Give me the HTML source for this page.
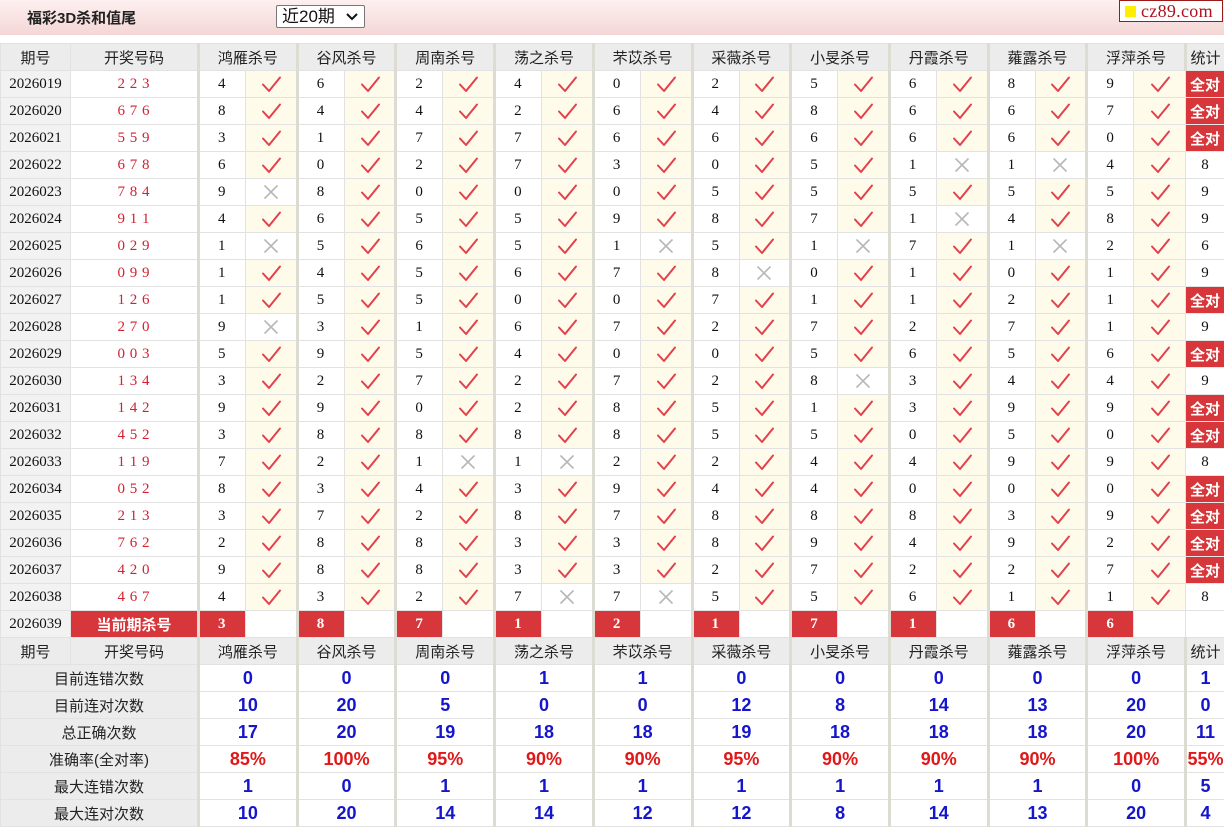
<!DOCTYPE html>
<html><head><meta charset="utf-8">
<style>
*{margin:0;padding:0;box-sizing:border-box}
body{width:1224px;height:827px;background:#fff;font-family:"Liberation Sans","Noto Sans CJK SC",sans-serif;overflow:hidden;position:relative}
.top{position:absolute;left:0;top:0;width:1224px;height:35px;background:linear-gradient(#fdf0f0,#f5d6d6)}
.ttl{position:absolute;left:27px;top:7px;font-size:15px;font-weight:bold;color:#222}
.sel{position:absolute;left:276px;top:5px;width:89px;height:23px;border:1px solid #777;background:#fff;border-radius:2px;font-size:17px;padding-left:5px;line-height:21px;color:#111}
.sel svg{position:absolute;right:6px;top:7px}
.logo{position:absolute;left:1119px;top:0;width:104px;height:22px;border:1px solid #9a1a1a;background:#fff;font-family:"Liberation Serif",serif;font-size:18px;color:#b01020;line-height:20px;padding-left:21px;letter-spacing:0.3px}
.logo i{position:absolute;left:5px;top:5px;width:11px;height:11px;background:#ffee00}
table{position:absolute;left:0;top:43px;border-collapse:collapse;table-layout:fixed;width:1224px}
td{border:1px solid #e2e2e2;height:27px;text-align:center;vertical-align:middle;padding:0;font-size:15px}
.h td{background:#ececec;color:#222;font-size:15px}
.h td.g{border-left:3px solid #dcdcd2}
.p{background:#f2f2f2;font-family:"Liberation Serif",serif;font-size:15px;color:#111}
.k{font-family:"Liberation Serif",serif;color:#d42030;letter-spacing:1px;word-spacing:-1px}
.n{border-left:3px solid #dcdcd2;font-family:"Liberation Serif",serif;color:#111;text-align:left;padding-left:18px}
.y{background:#fffbea}
.x{background:#fff}
td svg{display:block;margin:0 auto;width:22px;height:18px}
.s{font-family:"Liberation Serif",serif;color:#111}
.q{background:#d7363a;color:#fff;font-weight:bold;font-size:15px;border-color:#e6e6e6}
.kr{background:#d7363a;color:#fff;font-weight:bold;font-size:15px}
.kn{border-left:3px solid #dcdcd2;background:#d7363a;color:#fff;font-weight:bold;font-family:"Liberation Serif",serif;text-align:left;padding-left:18px}
.l{background:#ececec;color:#222}
.v{border-left:3px solid #dcdcd2;color:#1515cc;font-weight:bold;font-size:18px}
.r{color:#e01818}
</style></head><body>
<svg width="0" height="0" style="position:absolute">
<symbol id="c" viewBox="0 0 22 18"><path d="M3 9.5 L9 16 L20 2.5" fill="none" stroke="#e4404c" stroke-width="2" stroke-linecap="round" stroke-linejoin="round"/></symbol>
<symbol id="x" viewBox="0 0 22 18"><path d="M4.5 2.5 L17.5 15.5 M17.5 2.5 L4.5 15.5" fill="none" stroke="#b8b8b8" stroke-width="1.6"/></symbol>
</svg>
<div class="top"></div>
<div class="ttl">福彩3D杀和值尾</div>
<div class="sel">近20期<svg width="12" height="8" viewBox="0 0 12 8"><path d="M1 1 L6 6 L11 1" fill="none" stroke="#111" stroke-width="2"/></svg></div>
<div class="logo"><i></i>cz89.com</div>
<table>
<colgroup><col style="width:70px"><col style="width:128px">
<col style="width:47px"><col style="width:51.7px"><col style="width:47px"><col style="width:51.7px"><col style="width:47px"><col style="width:51.7px"><col style="width:47px"><col style="width:51.7px"><col style="width:47px"><col style="width:51.7px"><col style="width:47px"><col style="width:51.7px"><col style="width:47px"><col style="width:51.7px"><col style="width:47px"><col style="width:51.7px"><col style="width:47px"><col style="width:51.7px"><col style="width:47px"><col style="width:51.7px">
<col style="width:39px"></colgroup>
<tr class="h" style="height:26px"><td>期号</td><td>开奖号码</td><td class="g" colspan="2">鸿雁杀号</td><td class="g" colspan="2">谷风杀号</td><td class="g" colspan="2">周南杀号</td><td class="g" colspan="2">荡之杀号</td><td class="g" colspan="2">芣苡杀号</td><td class="g" colspan="2">采薇杀号</td><td class="g" colspan="2">小旻杀号</td><td class="g" colspan="2">丹霞杀号</td><td class="g" colspan="2">蕹露杀号</td><td class="g" colspan="2">浮萍杀号</td><td class="g">统计</td></tr>
<tr><td class="p">2026019</td><td class="k">2 2 3</td><td class="n">4</td><td class="y"><svg><use href="#c"/></svg></td><td class="n">6</td><td class="y"><svg><use href="#c"/></svg></td><td class="n">2</td><td class="y"><svg><use href="#c"/></svg></td><td class="n">4</td><td class="y"><svg><use href="#c"/></svg></td><td class="n">0</td><td class="y"><svg><use href="#c"/></svg></td><td class="n">2</td><td class="y"><svg><use href="#c"/></svg></td><td class="n">5</td><td class="y"><svg><use href="#c"/></svg></td><td class="n">6</td><td class="y"><svg><use href="#c"/></svg></td><td class="n">8</td><td class="y"><svg><use href="#c"/></svg></td><td class="n">9</td><td class="y"><svg><use href="#c"/></svg></td><td class="q">全对</td></tr>
<tr><td class="p">2026020</td><td class="k">6 7 6</td><td class="n">8</td><td class="y"><svg><use href="#c"/></svg></td><td class="n">4</td><td class="y"><svg><use href="#c"/></svg></td><td class="n">4</td><td class="y"><svg><use href="#c"/></svg></td><td class="n">2</td><td class="y"><svg><use href="#c"/></svg></td><td class="n">6</td><td class="y"><svg><use href="#c"/></svg></td><td class="n">4</td><td class="y"><svg><use href="#c"/></svg></td><td class="n">8</td><td class="y"><svg><use href="#c"/></svg></td><td class="n">6</td><td class="y"><svg><use href="#c"/></svg></td><td class="n">6</td><td class="y"><svg><use href="#c"/></svg></td><td class="n">7</td><td class="y"><svg><use href="#c"/></svg></td><td class="q">全对</td></tr>
<tr><td class="p">2026021</td><td class="k">5 5 9</td><td class="n">3</td><td class="y"><svg><use href="#c"/></svg></td><td class="n">1</td><td class="y"><svg><use href="#c"/></svg></td><td class="n">7</td><td class="y"><svg><use href="#c"/></svg></td><td class="n">7</td><td class="y"><svg><use href="#c"/></svg></td><td class="n">6</td><td class="y"><svg><use href="#c"/></svg></td><td class="n">6</td><td class="y"><svg><use href="#c"/></svg></td><td class="n">6</td><td class="y"><svg><use href="#c"/></svg></td><td class="n">6</td><td class="y"><svg><use href="#c"/></svg></td><td class="n">6</td><td class="y"><svg><use href="#c"/></svg></td><td class="n">0</td><td class="y"><svg><use href="#c"/></svg></td><td class="q">全对</td></tr>
<tr><td class="p">2026022</td><td class="k">6 7 8</td><td class="n">6</td><td class="y"><svg><use href="#c"/></svg></td><td class="n">0</td><td class="y"><svg><use href="#c"/></svg></td><td class="n">2</td><td class="y"><svg><use href="#c"/></svg></td><td class="n">7</td><td class="y"><svg><use href="#c"/></svg></td><td class="n">3</td><td class="y"><svg><use href="#c"/></svg></td><td class="n">0</td><td class="y"><svg><use href="#c"/></svg></td><td class="n">5</td><td class="y"><svg><use href="#c"/></svg></td><td class="n">1</td><td class="x"><svg><use href="#x"/></svg></td><td class="n">1</td><td class="x"><svg><use href="#x"/></svg></td><td class="n">4</td><td class="y"><svg><use href="#c"/></svg></td><td class="s">8</td></tr>
<tr><td class="p">2026023</td><td class="k">7 8 4</td><td class="n">9</td><td class="x"><svg><use href="#x"/></svg></td><td class="n">8</td><td class="y"><svg><use href="#c"/></svg></td><td class="n">0</td><td class="y"><svg><use href="#c"/></svg></td><td class="n">0</td><td class="y"><svg><use href="#c"/></svg></td><td class="n">0</td><td class="y"><svg><use href="#c"/></svg></td><td class="n">5</td><td class="y"><svg><use href="#c"/></svg></td><td class="n">5</td><td class="y"><svg><use href="#c"/></svg></td><td class="n">5</td><td class="y"><svg><use href="#c"/></svg></td><td class="n">5</td><td class="y"><svg><use href="#c"/></svg></td><td class="n">5</td><td class="y"><svg><use href="#c"/></svg></td><td class="s">9</td></tr>
<tr><td class="p">2026024</td><td class="k">9 1 1</td><td class="n">4</td><td class="y"><svg><use href="#c"/></svg></td><td class="n">6</td><td class="y"><svg><use href="#c"/></svg></td><td class="n">5</td><td class="y"><svg><use href="#c"/></svg></td><td class="n">5</td><td class="y"><svg><use href="#c"/></svg></td><td class="n">9</td><td class="y"><svg><use href="#c"/></svg></td><td class="n">8</td><td class="y"><svg><use href="#c"/></svg></td><td class="n">7</td><td class="y"><svg><use href="#c"/></svg></td><td class="n">1</td><td class="x"><svg><use href="#x"/></svg></td><td class="n">4</td><td class="y"><svg><use href="#c"/></svg></td><td class="n">8</td><td class="y"><svg><use href="#c"/></svg></td><td class="s">9</td></tr>
<tr><td class="p">2026025</td><td class="k">0 2 9</td><td class="n">1</td><td class="x"><svg><use href="#x"/></svg></td><td class="n">5</td><td class="y"><svg><use href="#c"/></svg></td><td class="n">6</td><td class="y"><svg><use href="#c"/></svg></td><td class="n">5</td><td class="y"><svg><use href="#c"/></svg></td><td class="n">1</td><td class="x"><svg><use href="#x"/></svg></td><td class="n">5</td><td class="y"><svg><use href="#c"/></svg></td><td class="n">1</td><td class="x"><svg><use href="#x"/></svg></td><td class="n">7</td><td class="y"><svg><use href="#c"/></svg></td><td class="n">1</td><td class="x"><svg><use href="#x"/></svg></td><td class="n">2</td><td class="y"><svg><use href="#c"/></svg></td><td class="s">6</td></tr>
<tr><td class="p">2026026</td><td class="k">0 9 9</td><td class="n">1</td><td class="y"><svg><use href="#c"/></svg></td><td class="n">4</td><td class="y"><svg><use href="#c"/></svg></td><td class="n">5</td><td class="y"><svg><use href="#c"/></svg></td><td class="n">6</td><td class="y"><svg><use href="#c"/></svg></td><td class="n">7</td><td class="y"><svg><use href="#c"/></svg></td><td class="n">8</td><td class="x"><svg><use href="#x"/></svg></td><td class="n">0</td><td class="y"><svg><use href="#c"/></svg></td><td class="n">1</td><td class="y"><svg><use href="#c"/></svg></td><td class="n">0</td><td class="y"><svg><use href="#c"/></svg></td><td class="n">1</td><td class="y"><svg><use href="#c"/></svg></td><td class="s">9</td></tr>
<tr><td class="p">2026027</td><td class="k">1 2 6</td><td class="n">1</td><td class="y"><svg><use href="#c"/></svg></td><td class="n">5</td><td class="y"><svg><use href="#c"/></svg></td><td class="n">5</td><td class="y"><svg><use href="#c"/></svg></td><td class="n">0</td><td class="y"><svg><use href="#c"/></svg></td><td class="n">0</td><td class="y"><svg><use href="#c"/></svg></td><td class="n">7</td><td class="y"><svg><use href="#c"/></svg></td><td class="n">1</td><td class="y"><svg><use href="#c"/></svg></td><td class="n">1</td><td class="y"><svg><use href="#c"/></svg></td><td class="n">2</td><td class="y"><svg><use href="#c"/></svg></td><td class="n">1</td><td class="y"><svg><use href="#c"/></svg></td><td class="q">全对</td></tr>
<tr><td class="p">2026028</td><td class="k">2 7 0</td><td class="n">9</td><td class="x"><svg><use href="#x"/></svg></td><td class="n">3</td><td class="y"><svg><use href="#c"/></svg></td><td class="n">1</td><td class="y"><svg><use href="#c"/></svg></td><td class="n">6</td><td class="y"><svg><use href="#c"/></svg></td><td class="n">7</td><td class="y"><svg><use href="#c"/></svg></td><td class="n">2</td><td class="y"><svg><use href="#c"/></svg></td><td class="n">7</td><td class="y"><svg><use href="#c"/></svg></td><td class="n">2</td><td class="y"><svg><use href="#c"/></svg></td><td class="n">7</td><td class="y"><svg><use href="#c"/></svg></td><td class="n">1</td><td class="y"><svg><use href="#c"/></svg></td><td class="s">9</td></tr>
<tr><td class="p">2026029</td><td class="k">0 0 3</td><td class="n">5</td><td class="y"><svg><use href="#c"/></svg></td><td class="n">9</td><td class="y"><svg><use href="#c"/></svg></td><td class="n">5</td><td class="y"><svg><use href="#c"/></svg></td><td class="n">4</td><td class="y"><svg><use href="#c"/></svg></td><td class="n">0</td><td class="y"><svg><use href="#c"/></svg></td><td class="n">0</td><td class="y"><svg><use href="#c"/></svg></td><td class="n">5</td><td class="y"><svg><use href="#c"/></svg></td><td class="n">6</td><td class="y"><svg><use href="#c"/></svg></td><td class="n">5</td><td class="y"><svg><use href="#c"/></svg></td><td class="n">6</td><td class="y"><svg><use href="#c"/></svg></td><td class="q">全对</td></tr>
<tr><td class="p">2026030</td><td class="k">1 3 4</td><td class="n">3</td><td class="y"><svg><use href="#c"/></svg></td><td class="n">2</td><td class="y"><svg><use href="#c"/></svg></td><td class="n">7</td><td class="y"><svg><use href="#c"/></svg></td><td class="n">2</td><td class="y"><svg><use href="#c"/></svg></td><td class="n">7</td><td class="y"><svg><use href="#c"/></svg></td><td class="n">2</td><td class="y"><svg><use href="#c"/></svg></td><td class="n">8</td><td class="x"><svg><use href="#x"/></svg></td><td class="n">3</td><td class="y"><svg><use href="#c"/></svg></td><td class="n">4</td><td class="y"><svg><use href="#c"/></svg></td><td class="n">4</td><td class="y"><svg><use href="#c"/></svg></td><td class="s">9</td></tr>
<tr><td class="p">2026031</td><td class="k">1 4 2</td><td class="n">9</td><td class="y"><svg><use href="#c"/></svg></td><td class="n">9</td><td class="y"><svg><use href="#c"/></svg></td><td class="n">0</td><td class="y"><svg><use href="#c"/></svg></td><td class="n">2</td><td class="y"><svg><use href="#c"/></svg></td><td class="n">8</td><td class="y"><svg><use href="#c"/></svg></td><td class="n">5</td><td class="y"><svg><use href="#c"/></svg></td><td class="n">1</td><td class="y"><svg><use href="#c"/></svg></td><td class="n">3</td><td class="y"><svg><use href="#c"/></svg></td><td class="n">9</td><td class="y"><svg><use href="#c"/></svg></td><td class="n">9</td><td class="y"><svg><use href="#c"/></svg></td><td class="q">全对</td></tr>
<tr><td class="p">2026032</td><td class="k">4 5 2</td><td class="n">3</td><td class="y"><svg><use href="#c"/></svg></td><td class="n">8</td><td class="y"><svg><use href="#c"/></svg></td><td class="n">8</td><td class="y"><svg><use href="#c"/></svg></td><td class="n">8</td><td class="y"><svg><use href="#c"/></svg></td><td class="n">8</td><td class="y"><svg><use href="#c"/></svg></td><td class="n">5</td><td class="y"><svg><use href="#c"/></svg></td><td class="n">5</td><td class="y"><svg><use href="#c"/></svg></td><td class="n">0</td><td class="y"><svg><use href="#c"/></svg></td><td class="n">5</td><td class="y"><svg><use href="#c"/></svg></td><td class="n">0</td><td class="y"><svg><use href="#c"/></svg></td><td class="q">全对</td></tr>
<tr><td class="p">2026033</td><td class="k">1 1 9</td><td class="n">7</td><td class="y"><svg><use href="#c"/></svg></td><td class="n">2</td><td class="y"><svg><use href="#c"/></svg></td><td class="n">1</td><td class="x"><svg><use href="#x"/></svg></td><td class="n">1</td><td class="x"><svg><use href="#x"/></svg></td><td class="n">2</td><td class="y"><svg><use href="#c"/></svg></td><td class="n">2</td><td class="y"><svg><use href="#c"/></svg></td><td class="n">4</td><td class="y"><svg><use href="#c"/></svg></td><td class="n">4</td><td class="y"><svg><use href="#c"/></svg></td><td class="n">9</td><td class="y"><svg><use href="#c"/></svg></td><td class="n">9</td><td class="y"><svg><use href="#c"/></svg></td><td class="s">8</td></tr>
<tr><td class="p">2026034</td><td class="k">0 5 2</td><td class="n">8</td><td class="y"><svg><use href="#c"/></svg></td><td class="n">3</td><td class="y"><svg><use href="#c"/></svg></td><td class="n">4</td><td class="y"><svg><use href="#c"/></svg></td><td class="n">3</td><td class="y"><svg><use href="#c"/></svg></td><td class="n">9</td><td class="y"><svg><use href="#c"/></svg></td><td class="n">4</td><td class="y"><svg><use href="#c"/></svg></td><td class="n">4</td><td class="y"><svg><use href="#c"/></svg></td><td class="n">0</td><td class="y"><svg><use href="#c"/></svg></td><td class="n">0</td><td class="y"><svg><use href="#c"/></svg></td><td class="n">0</td><td class="y"><svg><use href="#c"/></svg></td><td class="q">全对</td></tr>
<tr><td class="p">2026035</td><td class="k">2 1 3</td><td class="n">3</td><td class="y"><svg><use href="#c"/></svg></td><td class="n">7</td><td class="y"><svg><use href="#c"/></svg></td><td class="n">2</td><td class="y"><svg><use href="#c"/></svg></td><td class="n">8</td><td class="y"><svg><use href="#c"/></svg></td><td class="n">7</td><td class="y"><svg><use href="#c"/></svg></td><td class="n">8</td><td class="y"><svg><use href="#c"/></svg></td><td class="n">8</td><td class="y"><svg><use href="#c"/></svg></td><td class="n">8</td><td class="y"><svg><use href="#c"/></svg></td><td class="n">3</td><td class="y"><svg><use href="#c"/></svg></td><td class="n">9</td><td class="y"><svg><use href="#c"/></svg></td><td class="q">全对</td></tr>
<tr><td class="p">2026036</td><td class="k">7 6 2</td><td class="n">2</td><td class="y"><svg><use href="#c"/></svg></td><td class="n">8</td><td class="y"><svg><use href="#c"/></svg></td><td class="n">8</td><td class="y"><svg><use href="#c"/></svg></td><td class="n">3</td><td class="y"><svg><use href="#c"/></svg></td><td class="n">3</td><td class="y"><svg><use href="#c"/></svg></td><td class="n">8</td><td class="y"><svg><use href="#c"/></svg></td><td class="n">9</td><td class="y"><svg><use href="#c"/></svg></td><td class="n">4</td><td class="y"><svg><use href="#c"/></svg></td><td class="n">9</td><td class="y"><svg><use href="#c"/></svg></td><td class="n">2</td><td class="y"><svg><use href="#c"/></svg></td><td class="q">全对</td></tr>
<tr><td class="p">2026037</td><td class="k">4 2 0</td><td class="n">9</td><td class="y"><svg><use href="#c"/></svg></td><td class="n">8</td><td class="y"><svg><use href="#c"/></svg></td><td class="n">8</td><td class="y"><svg><use href="#c"/></svg></td><td class="n">3</td><td class="y"><svg><use href="#c"/></svg></td><td class="n">3</td><td class="y"><svg><use href="#c"/></svg></td><td class="n">2</td><td class="y"><svg><use href="#c"/></svg></td><td class="n">7</td><td class="y"><svg><use href="#c"/></svg></td><td class="n">2</td><td class="y"><svg><use href="#c"/></svg></td><td class="n">2</td><td class="y"><svg><use href="#c"/></svg></td><td class="n">7</td><td class="y"><svg><use href="#c"/></svg></td><td class="q">全对</td></tr>
<tr><td class="p">2026038</td><td class="k">4 6 7</td><td class="n">4</td><td class="y"><svg><use href="#c"/></svg></td><td class="n">3</td><td class="y"><svg><use href="#c"/></svg></td><td class="n">2</td><td class="y"><svg><use href="#c"/></svg></td><td class="n">7</td><td class="x"><svg><use href="#x"/></svg></td><td class="n">7</td><td class="x"><svg><use href="#x"/></svg></td><td class="n">5</td><td class="y"><svg><use href="#c"/></svg></td><td class="n">5</td><td class="y"><svg><use href="#c"/></svg></td><td class="n">6</td><td class="y"><svg><use href="#c"/></svg></td><td class="n">1</td><td class="y"><svg><use href="#c"/></svg></td><td class="n">1</td><td class="y"><svg><use href="#c"/></svg></td><td class="s">8</td></tr>
<tr><td class="p">2026039</td><td class="kr">当前期杀号</td><td class="kn">3</td><td></td><td class="kn">8</td><td></td><td class="kn">7</td><td></td><td class="kn">1</td><td></td><td class="kn">2</td><td></td><td class="kn">1</td><td></td><td class="kn">7</td><td></td><td class="kn">1</td><td></td><td class="kn">6</td><td></td><td class="kn">6</td><td></td><td></td></tr>
<tr class="h"><td>期号</td><td>开奖号码</td><td class="g" colspan="2">鸿雁杀号</td><td class="g" colspan="2">谷风杀号</td><td class="g" colspan="2">周南杀号</td><td class="g" colspan="2">荡之杀号</td><td class="g" colspan="2">芣苡杀号</td><td class="g" colspan="2">采薇杀号</td><td class="g" colspan="2">小旻杀号</td><td class="g" colspan="2">丹霞杀号</td><td class="g" colspan="2">蕹露杀号</td><td class="g" colspan="2">浮萍杀号</td><td class="g">统计</td></tr>
<tr><td class="l" colspan="2">目前连错次数</td><td class="v" colspan="2">0</td><td class="v" colspan="2">0</td><td class="v" colspan="2">0</td><td class="v" colspan="2">1</td><td class="v" colspan="2">1</td><td class="v" colspan="2">0</td><td class="v" colspan="2">0</td><td class="v" colspan="2">0</td><td class="v" colspan="2">0</td><td class="v" colspan="2">0</td><td class="v">1</td></tr>
<tr><td class="l" colspan="2">目前连对次数</td><td class="v" colspan="2">10</td><td class="v" colspan="2">20</td><td class="v" colspan="2">5</td><td class="v" colspan="2">0</td><td class="v" colspan="2">0</td><td class="v" colspan="2">12</td><td class="v" colspan="2">8</td><td class="v" colspan="2">14</td><td class="v" colspan="2">13</td><td class="v" colspan="2">20</td><td class="v">0</td></tr>
<tr><td class="l" colspan="2">总正确次数</td><td class="v" colspan="2">17</td><td class="v" colspan="2">20</td><td class="v" colspan="2">19</td><td class="v" colspan="2">18</td><td class="v" colspan="2">18</td><td class="v" colspan="2">19</td><td class="v" colspan="2">18</td><td class="v" colspan="2">18</td><td class="v" colspan="2">18</td><td class="v" colspan="2">20</td><td class="v">11</td></tr>
<tr><td class="l" colspan="2">准确率(全对率)</td><td class="v r" colspan="2">85%</td><td class="v r" colspan="2">100%</td><td class="v r" colspan="2">95%</td><td class="v r" colspan="2">90%</td><td class="v r" colspan="2">90%</td><td class="v r" colspan="2">95%</td><td class="v r" colspan="2">90%</td><td class="v r" colspan="2">90%</td><td class="v r" colspan="2">90%</td><td class="v r" colspan="2">100%</td><td class="v r">55%</td></tr>
<tr><td class="l" colspan="2">最大连错次数</td><td class="v" colspan="2">1</td><td class="v" colspan="2">0</td><td class="v" colspan="2">1</td><td class="v" colspan="2">1</td><td class="v" colspan="2">1</td><td class="v" colspan="2">1</td><td class="v" colspan="2">1</td><td class="v" colspan="2">1</td><td class="v" colspan="2">1</td><td class="v" colspan="2">0</td><td class="v">5</td></tr>
<tr><td class="l" colspan="2">最大连对次数</td><td class="v" colspan="2">10</td><td class="v" colspan="2">20</td><td class="v" colspan="2">14</td><td class="v" colspan="2">14</td><td class="v" colspan="2">12</td><td class="v" colspan="2">12</td><td class="v" colspan="2">8</td><td class="v" colspan="2">14</td><td class="v" colspan="2">13</td><td class="v" colspan="2">20</td><td class="v">4</td></tr>
</table>
</body></html>
